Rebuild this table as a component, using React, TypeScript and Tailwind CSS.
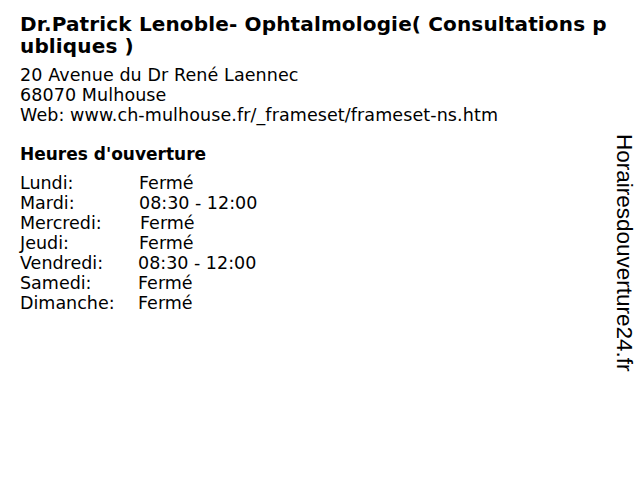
// App.tsx - opening hours card
const hours = [
  { day: 'Lundi:', time: 'Fermé', w: 'w-[119px]' },
  { day: 'Mardi:', time: '08:30 - 12:00', w: 'w-[119px]' },
  { day: 'Mercredi:', time: 'Fermé', w: 'w-[120px]' },
  { day: 'Jeudi:', time: 'Fermé', w: 'w-[119px]' },
  { day: 'Vendredi:', time: '08:30 - 12:00', w: 'w-[118px]' },
  { day: 'Samedi:', time: 'Fermé', w: 'w-[118px]' },
  { day: 'Dimanche:', time: 'Fermé', w: 'w-[118px]' },
];

export default function App() {
  return (
    <div className="flex w-[640px] h-[480px] bg-white text-black overflow-hidden font-['DejaVu_Sans',sans-serif]">
      {/* Main column */}
      <div className="w-[596px] pl-5 pt-[13px]">
        <h1 className="w-[592px] font-bold text-[20px] leading-[22px] tracking-[0.15px] break-all">
          Dr.Patrick Lenoble- Ophtalmologie( Consultations publiques )
        </h1>
        <div className="mt-[8px] text-[17.5px] leading-[20px] tracking-[0.1px]">
          <div>20 Avenue du Dr René Laennec</div>
          <div>68070 Mulhouse</div>
          <div>Web: www.ch-mulhouse.fr/_frameset/frameset-ns.htm</div>
        </div>

        <h2 className="mt-[19px] font-bold text-[17px] leading-[20px]">
          Heures d'ouverture
        </h2>
        <div className="mt-[9px] text-[17.5px] leading-[20px]">
          {hours.map((h) => (
            <div key={h.day} className="flex">
              <span className={h.w}>{h.day}</span>
              <span>{h.time}</span>
            </div>
          ))}
        </div>
      </div>

      {/* Side brand */}
      <div className="flex-1 pt-[134px] pl-[17px]">
        <div className="[writing-mode:vertical-rl] font-['Liberation_Sans',sans-serif] text-[22.5px] leading-[22px]">
          Horairesdouverture24.fr
        </div>
      </div>
    </div>
  );
}
